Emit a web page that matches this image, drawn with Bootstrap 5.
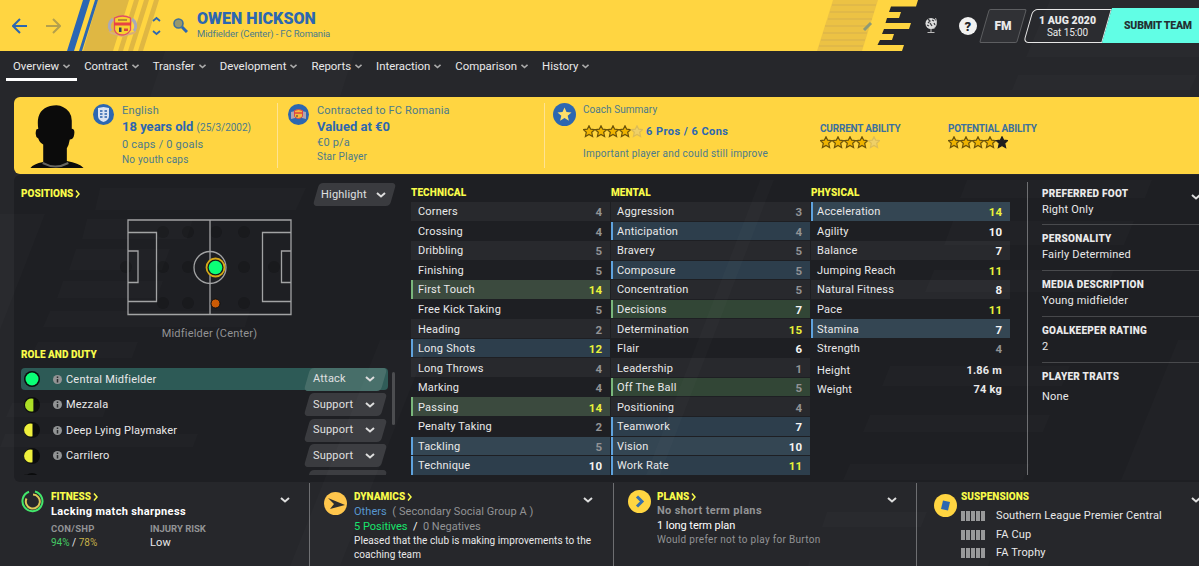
<!DOCTYPE html>
<html lang="en">
<head>
    <meta charset="UTF-8">
    <meta name="viewport" content="width=device-width, initial-scale=1.0">
    <title>Owen Hickson - Overview</title>
    <link rel="stylesheet" href="https://cdn.jsdelivr.net/npm/bootstrap@5.3.0/dist/css/bootstrap.min.css">
    <style>
        :root {
            --club-yellow: #ffd541;
            --club-blue: #2c67b1;
            --club-text: #4b7a8c;
            --accent: #f8fb4a;
        }
        body {
            width: 1199px;
            height: 566px;
            overflow: hidden;
            position: relative;
            background: #26272b;
            color: #e9e9ea;
            font-family: Roboto, "Liberation Sans", sans-serif;
            font-size: 11px;
            line-height: 16px;
            letter-spacing: .2px;
        }
        svg { display: block; flex: none; }
        .over { position: absolute; left: 0; top: 0; pointer-events: none; }
        .title-sm { font-weight: 900; font-size: 10px; letter-spacing: .02px; }
        .yellow { color: var(--accent); }
        .grey { color: #929395; }

        /* top bar */
        .topbar { height: 51px; position: relative; }
        .topbar > * { position: relative; }
        .topbar > .over { position: absolute; }
        .player-name { font-size: 16px; font-weight: 900; line-height: 18px; color: var(--club-blue); letter-spacing: .05px; }
        .player-sub { font-size: 9.5px; line-height: 12px; color: #4b7a8c; letter-spacing: -.15px; }
        .slant { position: relative; z-index: 0; height: 34px; }
        .slant::before {
            content: "";
            position: absolute;
            inset: 0;
            z-index: -1;
            transform: skewX(-16deg);
        }
        .fm { width: 38px; font-weight: 900; font-size: 12px; margin-left: 4px; letter-spacing: 0; }
        .fm::before { border: 1px solid #5d5e61; border-radius: 2px; background: #303135; }
        .date { width: 79px; margin-left: 6px; line-height: 12px; }
        .date::before { border: 1.5px solid #e6e6e6; border-radius: 5px 0 0 5px; background: #28292d; }
        .submit { width: 92px; height: 35px; padding-left: 17px; color: #202e31; font-weight: 900; font-size: 10.5px; letter-spacing: -.2px; }
        .submit::before { background: #5ffee5; right: -20px; }

        .tabs { height: 30px; padding-left: 6px; }
        .tabs .tab { padding: 2px 7px 0; height: 30px; gap: 4px; color: #e9e9ea; border-bottom: 3px solid transparent; letter-spacing: 0; font-size: 11.4px; }
        .tabs .tab.active { border-color: #fff; }

        /* player card */
        .bio { margin: 16px 0 0 14px; height: 77px; background: var(--club-yellow); border-radius: 6px 0 0 6px; color: var(--club-text); }
        .bio .strong { color: var(--club-blue); font-weight: 700; font-size: 13px; line-height: 16px; letter-spacing: 0; }
        .bio .small-line { font-size: 10px; line-height: 12px; }
        .bio-col { padding-top: 6px; flex: none; }
        .bio-sep { border-left: 1px solid #ffe391; height: 65px; margin-top: 6px; }

        /* main panel */
        .panel { margin: 1px 0 0 14px; height: 307px; background: #1e1f23; border-radius: 6px 0 0 6px; }
        .left-col { width: 397px; padding: 0 0 0 7px; }
        .drop { width: 77px; height: 23px; color: #e0e0e1; padding: 1px 7px 0 5px; }
        .drop::before { background: #3a3b3f; border-radius: 4px; }
        .role-list { width: 367px; height: 107px; overflow: hidden; }
        .role { height: 22px; margin-bottom: 3.6px; border-radius: 4px; }
        .role > span { padding-top: 1px; }
        .role .drop { padding: 0 9px 0 6px; }
        .role.active { background: #2d5a56; }
        .role.active .drop::before { background: #476e69; }
        .scroll { width: 3px; height: 53px; background: #4a4b4e; border-radius: 2px; }
        .attr-col { width: 199px; margin-right: 1px; }
        .attr { height: 18.55px; margin-bottom: 1px; padding: 2px 8px 0 7px; }
        .attr:nth-child(even) { background: #28292d; }
        .attr.key { background: #324636; border-left: 2px solid #79b77b; padding-left: 5px; }
        .attr.key.lit { background: #3b4a3e; }
        .attr.pref { background: #2d3e4c; border-left: 2px solid #5fa3de; padding-left: 5px; }
        .attr.pref.lit { background: #344653; }
        .attr-col + .attr-col .attr span { margin-left: -1px; }
        .attr b { font-size: 11.5px; letter-spacing: 0; }
        .info-col { width: 172px; margin: 7px 0 0 16px; padding-left: 14px; height: 293px; border-left: 1px solid #6d6e71; }
        .info-col .title-sm { letter-spacing: .27px; }
        .info { height: 42px; padding-top: 4px; }
        .info + .info { height: 46px; padding-top: 6px; border-top: 1px solid #47484b; }

        /* bottom boxes */
        .bottom { display: grid; grid-template-columns: 309px 304px 303px 283px; height: 84px; }
        .bottom > div { margin-top: 1px; }
        .bottom > div > div { flex: none; }
        .bottom > div + div { border-left: 1px solid #6d6e71; }
        .bar { width: 4px; height: 10px; background: #98999a; }
    </style>
</head>
<body>
    <header class="topbar d-flex align-items-center">
        <svg class="over" width="1199" height="51">
            <path fill="#ffd541" d="M0 0H918L916 6.5H891L889 12H901L899 18H887L885.500 23H911L909 29H884L882 34H894L892 40H880L877.500 45H904L902 51H0z"/>
            <path fill="#dfb743" d="M98 0H129L113 51H83zM134 0h5l-16 51h-5zM144 0h5l-16 51h-5zM154 0h5l-16 51h-5z"/>
            <path fill="#2b66b3" d="M83 0h7L74 51h-7zM95 0h3L82 51h-3z"/>
            <path fill="#ecc244" d="M833 0H878L862 51H817z"/>
            <path stroke="#e1b948" stroke-width="2" d="M832 5h44M830 12h44M828 19h44M825 26h44M823 33h44M821 40h44M819 46h44"/>
            <path stroke="#8e9a75" stroke-width="3" d="M864 30l7-7"/>
        </svg>
        <svg style="margin-left:12px" width="15" height="16" fill="none" stroke="#2c67b1" stroke-width="2"><path d="M8 1L1 8l7 7M1 8h14"/></svg>
        <svg style="margin-left:19px" width="15" height="16" fill="none" stroke="#b4a04c" stroke-width="2"><path d="M7 1l7 7-7 7M14 8H0"/></svg>
        <!-- club crest -->
        <svg style="margin-left:46px" width="31" height="22" viewBox="0 0 31 22">
            <path d="M6 4C2 7 1 12 4 16M25 4c4 3 5 8 2 12" fill="none" stroke="#aaa9b8" stroke-width="3"/>
            <path d="M1 16l8 2 6 3 7-3 8-2-3 3-12 3-11-3z" fill="#d8af79"/>
            <path d="M7.500 3q8-4 16 0v12q-3 5-8.500 5t-7.500-5z" fill="#f8d22f" stroke="#e04b68" stroke-width="1.300"/>
            <path d="M7 7.500h17v3H7z" fill="#e84343"/><path d="M11 5h9" stroke="#a47530" stroke-width="1.500"/>
            <path d="M12 12.500h2.500v4.500H12z" fill="#3b3d5e"/><path d="M17 13.500h4v2.500h-4z" fill="#d6493b"/>
        </svg>
        <svg style="margin-left:14px" width="9" height="20" fill="none" stroke="#2c67b1" stroke-width="1.800"><path d="M1 5L4.500 2 8 5M1 15l3.500 3L8 15"/></svg>
        <svg style="margin-left:12px" width="15" height="15"><circle cx="5.500" cy="5.500" r="4.500" fill="#97986c" stroke="#3e709b" stroke-width="1.600"/><path d="M9 9l5 5" stroke="#2c67b1" stroke-width="3"/></svg>
        <div style="margin-left:9px;margin-top:-2px">
            <div class="player-name">OWEN HICKSON</div>
            <div class="player-sub">Midfielder (Center) - FC Romania</div>
        </div>
        <div class="d-flex align-items-center ms-auto">
            <svg width="15" height="17"><circle cx="7" cy="6.500" r="5.500" fill="#ddd"/><path d="M4 2l2 2-2 2M8 3l2 1M6 6l2 3M10 6l1 2M3 8l2 1" stroke="#3b3c40" stroke-width="1.300" fill="none"/><path d="M11.500 1q3 6-2 11M7 12v3M3.500 15.500h7" stroke="#bbb" fill="none"/></svg>
            <svg class="ms-3" width="25" height="18"><circle cx="13" cy="9" r="9" fill="#f2f2f2"/><text x="13" y="13.500" text-anchor="middle" font-size="13" font-weight="900" fill="#26272b">?</text></svg>
            <div class="slant fm d-flex align-items-center justify-content-center">FM</div>
            <div class="slant date text-center"><div class="title-sm" style="padding-top:6px;font-size:10.5px">1 AUG 2020</div><div style="font-size:10px;letter-spacing:-.1px">Sat 15:00</div></div>
            <div class="slant submit d-flex align-items-center">SUBMIT TEAM</div>
        </div>
    </header>

    <nav class="tabs d-flex" id="tabs"></nav>

    <section class="bio d-flex">
        <svg style="margin:8px 0 0 16px" width="54" height="63" viewBox="0 0 54 64">
            <path d="M0 64q3-4 13-6V40q-4-2-5-6-4-2-2-9l2-1Q5 5 20 1q9-2 13 1 9 4 9 14v8q4 0 2 8-1 3-4 3-1 6-3 9v13q12 2 17 7z" fill="#0b0b0b"/>
            <path d="M13 58q12 7 25 0l1 2q-13 7-27 0z" fill="#66655f"/>
        </svg>
        <svg style="margin:7px 0 0 9px" width="21" height="21"><circle cx="10.500" cy="10.500" r="10.500" fill="#2c67b1"/><path d="M5 4l5.500-1L16 4v8q0 4-5.500 6Q5 16 5 12z" fill="#dbe4f1"/><path d="M7 7h2.500M11.500 7H14M7 10h2.500M11.500 10H14M7 13h2.500M11.500 13H14" stroke="#5582bd" stroke-width="2"/></svg>
        <div class="bio-col ps-2" style="width:163px">
            <div>English</div>
            <div class="strong">18 years old <span class="fw-normal" style="font-size:10px;color:#4b7a8c">(25/3/2002)</span></div>
            <div style="line-height:18px">0 caps / 0 goals</div>
            <div class="small-line" style="line-height:11px">No youth caps</div>
        </div>
        <div class="bio-sep"></div>
        <svg style="margin:7px 0 0 10px" width="21" height="21"><circle cx="10.500" cy="10.500" r="10.500" fill="#2c67b1"/><path d="M3 8l4-1v7l-4 1zM18 8l-4-1v7l4 1z" fill="#b3a4ad"/><path d="M6.500 6.500q4-2 8 0v6q-4 4-8 0z" fill="#f7b83a" stroke="#d94a4d"/><path d="M6 9h9" stroke="#df4343" stroke-width="1.500"/><path d="M8 12h2" stroke="#333"/></svg>
        <div class="bio-col ps-2" style="width:235px">
            <div style="letter-spacing:.17px">Contracted to FC Romania</div>
            <div class="strong">Valued at €0</div>
            <div>€0 p/a</div>
            <div class="small-line">Star Player</div>
        </div>
        <div class="bio-sep"></div>
        <svg style="margin:6px 0 0 8px" width="23" height="23"><circle cx="11.500" cy="11.500" r="11.500" fill="#2c67b1"/><path d="M11.500 4.500l2 4.600 5 .4-3.800 3.300 1.200 4.900-4.400-2.600-4.400 2.600 1.200-4.900-3.800-3.300 5-.4z" fill="#ffdf6a"/></svg>
        <div class="bio-col" style="width:244px;padding:5px 0 0 7px">
            <div style="font-size:10px;letter-spacing:.05px">Coach Summary</div>
            <div class="d-flex align-items-center" style="height:20px;margin-top:3px"><span class="stars" data-last="pale"></span><b style="margin-left:3px;padding-top:1px;color:#2c67b1;letter-spacing:.45px">6 Pros / 6 Cons</b></div>
            <div style="font-size:10px;margin-top:4px;line-height:18px;letter-spacing:.23px">Important player and could still improve</div>
        </div>
        <div class="flex-shrink-0" style="width:128px;padding-top:25px">
            <div class="title-sm" style="font-weight:700;line-height:14px;color:#3b709d;letter-spacing:-.2px">CURRENT ABILITY</div>
            <div class="stars" data-last="pale"></div>
        </div>
        <div style="padding-top:25px">
            <div class="title-sm" style="font-weight:700;line-height:14px;color:#3b709d;letter-spacing:-.2px">POTENTIAL ABILITY</div>
            <div class="stars" data-last="dark"></div>
        </div>
    </section>

    <main class="panel d-flex">
        <div class="left-col">
            <div class="d-flex justify-content-between" style="padding:8px 18px 0 0">
                <div class="title-sm yellow d-flex align-items-center" style="height:22px">POSITIONS <svg style="margin-left:2px" width="5" height="8" fill="none" stroke="#f8fb4a" stroke-width="1.500"><path d="M1 .5l3 3.500-3 3.500"/></svg></div>
                <div class="slant drop d-flex align-items-center justify-content-between"><span>Highlight</span><svg width="10" height="6" fill="none" stroke="#ddd" stroke-width="2"><path d="M1 1l4 3.500L9 1"/></svg></div>
            </div>
            <svg style="margin:12px 0 0 96px" width="184" height="98" viewBox="117 218 184 98" fill="none">
                <g fill="#191a1d"><circle cx="126" cy="267" r="6"/><circle cx="163" cy="232" r="6"/><circle cx="188" cy="232" r="6"/><circle cx="216" cy="232" r="6"/><circle cx="244" cy="232" r="6"/><circle cx="163" cy="267" r="6"/><circle cx="188" cy="267" r="6"/><circle cx="244" cy="267" r="6"/><circle cx="274" cy="267" r="6"/><circle cx="163" cy="303" r="6"/><circle cx="188" cy="303" r="6"/><circle cx="244" cy="303" r="6"/></g>
                <g stroke="#a2a3a4" stroke-width="1.300"><path d="M128 220h163v94.500H128zM210 220v94.500M128 232.500h28.500v69H128M128 251h10v31.500h-10M291 232.500h-28.500v69H291M291 251h-9.500v31.500h9.500"/><circle cx="210" cy="267.500" r="16"/></g>
                <circle cx="215.500" cy="267.500" r="9" fill="#171a19" stroke="#d6a918" stroke-width="1.800"/>
                <circle cx="215.500" cy="267.500" r="6.800" fill="#0bff77"/>
                <circle cx="215.500" cy="303.500" r="4.500" fill="#cb5b05" stroke="#111"/>
            </svg>
            <div class="grey text-center" style="width:377px;margin-top:10px">Midfielder (Center)</div>
            <div class="title-sm yellow" style="margin-top:5px">ROLE AND DUTY</div>
            <div class="d-flex" style="margin-top:5px">
                <div class="role-list" id="roles"></div>
                <div class="scroll ms-1 mt-1"></div>
            </div>
        </div>
        <div class="d-flex" id="attributes" style="padding-top:9px"></div>
        <aside class="info-col">
            <div class="info"><div class="title-sm d-flex justify-content-between">PREFERRED FOOT <svg class="mt-2" width="8" height="6" fill="none" stroke="#ddd" stroke-width="2"><path d="M1 1l4 3.500L9 1"/></svg></div><div>Right Only</div></div>
            <div class="info"><div class="title-sm">PERSONALITY</div><div>Fairly Determined</div></div>
            <div class="info"><div class="title-sm">MEDIA DESCRIPTION</div><div>Young midfielder</div></div>
            <div class="info"><div class="title-sm">GOALKEEPER RATING</div><div>2</div></div>
            <div class="info"><div class="title-sm">PLAYER TRAITS</div><div class="mt-1">None</div></div>
        </aside>
    </main>

    <section class="bottom">
        <div class="d-flex" style="padding:7px 0 0 21px">
            <svg width="23" height="23" fill="none"><path d="M14 1.500a10 10 0 1 1-6 .3" stroke="#43e66b" stroke-width="2"/><path d="M12 4.500a7 7 0 1 1-6.500 4" stroke="#ddc857" stroke-width="2"/></svg>
            <div style="width:236px;padding-left:7px">
                <div class="title-sm yellow d-flex align-items-center" style="line-height:14px">FITNESS <svg style="margin-left:2px" width="5" height="8" fill="none" stroke="#f8fb4a" stroke-width="1.500"><path d="M1 .5l3 3.500-3 3.500"/></svg></div>
                <div class="fw-bold text-white" style="line-height:15px;letter-spacing:.36px">Lacking match sharpness</div>
                <div class="d-flex" style="margin-top:3px">
                    <div style="width:99px"><div class="grey fw-bold" style="font-size:9.500px;line-height:14px;letter-spacing:.3px">CON/SHP</div><div style="font-size:10px;line-height:13px;letter-spacing:0"><span style="color:#44c964">94%</span> / <span style="color:#c5b048">78%</span></div></div>
                    <div><div class="grey fw-bold" style="font-size:9.500px;line-height:14px;letter-spacing:0">INJURY RISK</div><div style="line-height:14px">Low</div></div>
                </div>
            </div>
            <svg style="margin-top:7px" width="10" height="6" fill="none" stroke="#ddd" stroke-width="2"><path d="M1 1l4 3.500L9 1"/></svg>
        </div>
        <div class="d-flex" style="padding:7px 0 0 14px">
            <svg style="margin-top:2px" width="23" height="23"><circle cx="11.500" cy="11.500" r="11.500" fill="#ffc64a"/><path d="M4 6l17 7-15 4 4-5z" fill="#2a2b2c"/></svg>
            <div style="width:236px;padding-left:7px">
                <div class="title-sm yellow d-flex align-items-center" style="line-height:14px">DYNAMICS <svg style="margin-left:2px" width="5" height="8" fill="none" stroke="#f8fb4a" stroke-width="1.500"><path d="M1 .5l3 3.500-3 3.500"/></svg></div>
                <div class="grey" style="line-height:15px;letter-spacing:.05px"><span style="color:#5796cf">Others</span> &nbsp;( Secondary Social Group A )</div>
                <div class="grey" style="line-height:15px;letter-spacing:0"><span style="color:#18e56c">5 Positives</span> <span class="text-white">&nbsp;/&nbsp;</span> 0 Negatives</div>
                <div class="text-nowrap" style="font-size:10px;line-height:14px;letter-spacing:.08px">Pleased that the club is making improvements to the<br>coaching team</div>
            </div>
            <svg style="margin-top:7px" width="10" height="6" fill="none" stroke="#ddd" stroke-width="2"><path d="M1 1l4 3.500L9 1"/></svg>
        </div>
        <div class="d-flex" style="padding:7px 0 0 14px">
            <svg width="23" height="23"><circle cx="11.500" cy="11.500" r="11.500" fill="#ffd541"/><path d="M9 6.500l5 5-5 5" fill="none" stroke="#3870ab" stroke-width="3"/></svg>
            <div style="width:236px;padding-left:6px">
                <div class="title-sm yellow d-flex align-items-center" style="line-height:13px">PLANS <svg style="margin-left:2px" width="5" height="8" fill="none" stroke="#f8fb4a" stroke-width="1.500"><path d="M1 .5l3 3.500-3 3.500"/></svg></div>
                <div class="grey fw-bold" style="line-height:15px;letter-spacing:.35px">No short term plans</div>
                <div class="text-white" style="line-height:15px;letter-spacing:-.07px">1 long term plan</div>
                <div class="grey" style="font-size:10px;line-height:14px;letter-spacing:.3px">Would prefer not to play for Burton</div>
            </div>
            <svg style="margin-top:7px" width="10" height="6" fill="none" stroke="#ddd" stroke-width="2"><path d="M1 1l4 3.500L9 1"/></svg>
        </div>
        <div class="d-flex" style="padding:7px 0 0 17px">
            <svg style="margin-top:4px" width="23" height="23"><circle cx="11.500" cy="11.500" r="11.500" fill="#ffd541"/><path d="M9 6.500l7 1.500-2 8.500-7-1.500z" fill="#2c67b1"/></svg>
            <div style="width:234px;padding-left:4px">
                <div class="title-sm yellow" style="line-height:14px">SUSPENSIONS</div>
                <div id="bans" style="padding-top:3px;letter-spacing:.15px"></div>
            </div>
            <svg style="margin-top:7px" width="10" height="6" fill="none" stroke="#ddd" stroke-width="2"><path d="M1 1l4 3.500L9 1"/></svg>
        </div>
    </section>

    <!-- faint slanted background bands -->
    <svg class="over" width="1199" height="566" fill="#fff" fill-opacity=".015">
        <path d="M1050 0H1199V57H1026zM1018 75h179l-7 15h-178zM100 188h206l-10 22H95zM87 219h106l-6 20H82zM76 249h94l-8 21H69zM63 281h100l-6 17H57zM50 311h200l-5 16H43zM38 342h100l-6 16H30zM12 403h96l-5 14H6zM5 434h193l-5 13H0zM0 214h45L0 330z"/>
        <path d="M967 180h185l-7 18H960zM953 221h181l-10 24H944zM934 270h180l-9 22h-180zM890 366h180l-8 20H882zM870 415h180l-7 17H863zM850 464h180l-7 16H843zM827 512h100l-6 15H822zM810 560h180l-2 6H808zM1178 340h21v140h-78zM165 51h190l-15 46H150z"/>
        <path d="M380 340h50l-90 226h-50zM760 180h14L660 475h-14z"/>
    </svg>

    <script>
        const chevron = '<svg width="10" height="6" fill="none" stroke="#ddd" stroke-width="2"><path d="M1 1l4 3.500L9 1"/></svg>';
        const smallChevron = '<svg style="margin-top:1px" width="7" height="5" fill="none" stroke="#aaa" stroke-width="1.600"><path d="M.5 .8l3 2.700 3-2.700"/></svg>';

        const tabs = ['Overview', 'Contract', 'Transfer', 'Development', 'Reports', 'Interaction', 'Comparison', 'History'];
        document.getElementById('tabs').innerHTML = tabs.map((name, i) =>
            `<div class="tab d-flex align-items-center ${i === 0 ? 'active' : ''}">${name} ${smallChevron}</div>`).join('');

        // five stars, the last one has its own fill
        const starPath = 'M6 .8l1.700 3.400 3.900.4-2.900 2.700.9 4.200L6 9.500l-3.600 2 .9-4.200L.4 4.600l3.900-.4z';
        document.querySelectorAll('.stars').forEach(el => {
            let stars = '';
            for (let i = 0; i < 5; i++) {
                let fill = '#f0b400', line = '#6a520a';
                if (i === 4) {
                    fill = el.dataset.last === 'dark' ? '#1f1f1f' : '#efd067';
                    line = el.dataset.last === 'dark' ? '#1f1f1f' : '#dcbc58';
                }
                stars += `<path transform="translate(${i * 12})" d="${starPath}" fill="${fill}" stroke="${line}" stroke-width="1.200"/>`;
            }
            el.innerHTML = `<svg width="60" height="13">${stars}</svg>`;
        });

        const roles = [
            ['Central Midfielder', 'Attack', '#0bff77', 1],
            ['Mezzala', 'Support', '#abdf24', .6],
            ['Deep Lying Playmaker', 'Support', '#eff03c', .5],
            ['Carrilero', 'Support', '#eff03c', .5],
            ['', '', '#111', 0]
        ];
        document.getElementById('roles').innerHTML = roles.map(([name, duty, color, part], i) => `
            <div class="role d-flex align-items-center ${i === 0 ? 'active' : ''}">
                <svg style="margin-left:3px" width="16" height="16"><circle cx="8" cy="8" r="8" fill="#0b0c0d"/>
                    ${part === 1 ? `<circle cx="8" cy="8" r="6.500" fill="${color}"/>` : `<path d="M${4 + part * 9} 1.800A6.500 6.500 0 1 0 ${4 + part * 9} 14.200z" fill="${color}"/>`}</svg>
                ${name ? '<svg style="margin-left:13px" width="9" height="9"><circle cx="4.500" cy="4.500" r="4.500" fill="#929495"/><path d="M4.500 1.500v1.500M4.500 4v3.500" stroke="#292b2d" stroke-width="1.500"/></svg>' : ''}
                <span class="ps-1">${name}</span>
                <div class="slant drop d-flex align-items-center justify-content-between ms-auto me-1"><span>${duty}</span>${chevron}</div>
            </div>`).join('');

        // [name, value, highlight]
        const attributes = {
            TECHNICAL: [['Corners', 4], ['Crossing', 4], ['Dribbling', 5], ['Finishing', 5], ['First Touch', 14, 'key lit'], ['Free Kick Taking', 5], ['Heading', 2],
                ['Long Shots', 12, 'pref'], ['Long Throws', 4], ['Marking', 4], ['Passing', 14, 'key lit'], ['Penalty Taking', 2], ['Tackling', 5, 'pref lit'], ['Technique', 10, 'pref']],
            MENTAL: [['Aggression', 3], ['Anticipation', 4, 'pref'], ['Bravery', 5], ['Composure', 5, 'pref'], ['Concentration', 5], ['Decisions', 7, 'key'], ['Determination', 15],
                ['Flair', 6], ['Leadership', 1], ['Off The Ball', 5, 'key'], ['Positioning', 4], ['Teamwork', 7, 'pref'], ['Vision', 10, 'pref lit'], ['Work Rate', 11, 'pref']],
            PHYSICAL: [['Acceleration', 14, 'pref lit'], ['Agility', 10], ['Balance', 7], ['Jumping Reach', 11], ['Natural Fitness', 8], ['Pace', 11], ['Stamina', 7, 'pref lit'], ['Strength', 4]]
        };
        function valueColor(v) {
            if (v > 10) return '#e8f23a';
            return v > 5 ? '#f4f4f4' : '#929395';
        }
        document.getElementById('attributes').innerHTML = Object.entries(attributes).map(([group, list]) => `
            <div class="attr-col">
                <div class="title-sm yellow" style="height:18px;padding-top:1px;letter-spacing:.1px">${group}</div>
                ${list.map(([name, value, type]) => `<div class="attr d-flex align-items-center justify-content-between ${type || ''}"><span>${name}</span><b style="color:${valueColor(value)}">${value}</b></div>`).join('')}
                ${group === 'PHYSICAL' ? '<div style="padding-top:5px"><div class="d-flex justify-content-between" style="padding:0 8px 3px 6px"><span>Height</span><b>1.86 m</b></div><div class="d-flex justify-content-between" style="padding:0 8px 0 6px"><span>Weight</span><b>74 kg</b></div></div>' : ''}
            </div>`).join('');

        document.getElementById('bans').innerHTML = ['Southern League Premier Central', 'FA Cup', 'FA Trophy'].map(name => `
            <div class="d-flex align-items-center text-nowrap" style="height:18.500px;gap:1px">${'<i class="bar"></i>'.repeat(5)}<span style="margin-left:10px">${name}</span></div>`).join('');
    </script>
    <script src="https://cdn.jsdelivr.net/npm/bootstrap@5.3.0/dist/js/bootstrap.bundle.min.js"></script>
</body>
</html>
